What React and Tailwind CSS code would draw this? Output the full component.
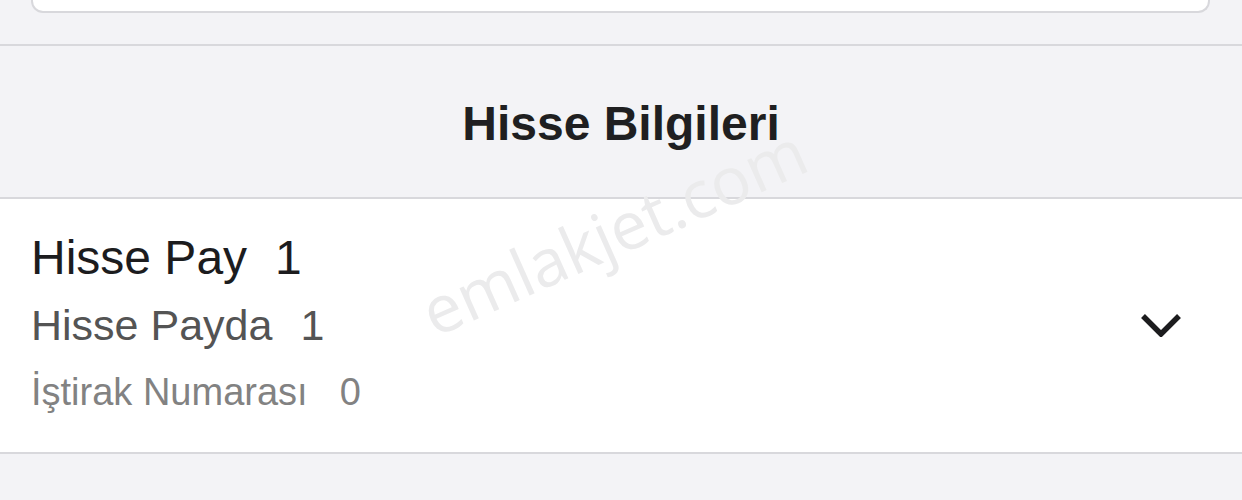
import React from "react";

const rows = [
  { label: "Hisse Pay", value: "1", cls: "text-[48px] leading-[56px] text-[#1c1c1e]", gap: "ml-[28px]" },
  { label: "Hisse Payda", value: "1", cls: "mt-[12px] text-[43px] leading-[54px] text-[#545454]", gap: "ml-[28px]" },
  { label: "İştirak Numarası", value: "0", cls: "mt-[16px] text-[38px] leading-[48px] text-[#828282]", gap: "ml-[32px]" },
];

const ChevronDown = () => (
  <svg width="40" height="24" viewBox="0 0 40 24" fill="none">
    <polyline
      points="2,3 20,21 38,3"
      stroke="#1c1c1e"
      strokeWidth="5.5"
      strokeLinejoin="miter"
    />
  </svg>
);

export default function App() {
  return (
    <div
      className="relative w-full h-[500px] overflow-hidden bg-[#f3f3f6]"
      style={{ fontFamily: '"Liberation Sans", Arial, sans-serif' }}
    >
      {/* card above, cut off by the top edge */}
      <div className="h-[44px] pl-[31px] pr-[32px]">
        <div className="h-[13px] bg-white border-2 border-t-0 border-[#d8d8dc] rounded-b-[12px]" />
      </div>

      <div className="border-t-2 border-[#d8d8dc] h-[153px] flex items-center justify-center">
        <h2 className="text-[48px] font-bold text-[#1f1f21] leading-none pt-[5px]">
          Hisse Bilgileri
        </h2>
      </div>

      <div className="bg-white border-y-2 border-[#d8d8dc] h-[257px] flex items-start justify-between pl-[31px] pr-[61px]">
        <div className="flex flex-col pt-[31px]">
          {rows.map((r) => (
            <div key={r.label} className={`flex whitespace-nowrap ${r.cls}`}>
              <span>{r.label}</span>
              <span className={r.gap}>{r.value}</span>
            </div>
          ))}
        </div>
        <div className="self-center pb-[1px]">
          <ChevronDown />
        </div>
      </div>

      {/* watermark */}
      <div
        className="absolute left-[613px] top-[230px] -translate-x-1/2 -translate-y-1/2 -rotate-[24deg] text-[66px] text-[#ebebec] whitespace-nowrap pointer-events-none select-none leading-none"
        style={{ fontFamily: '"Open Sans", sans-serif' }}
      >
        emlakjet.com
      </div>
    </div>
  );
}
